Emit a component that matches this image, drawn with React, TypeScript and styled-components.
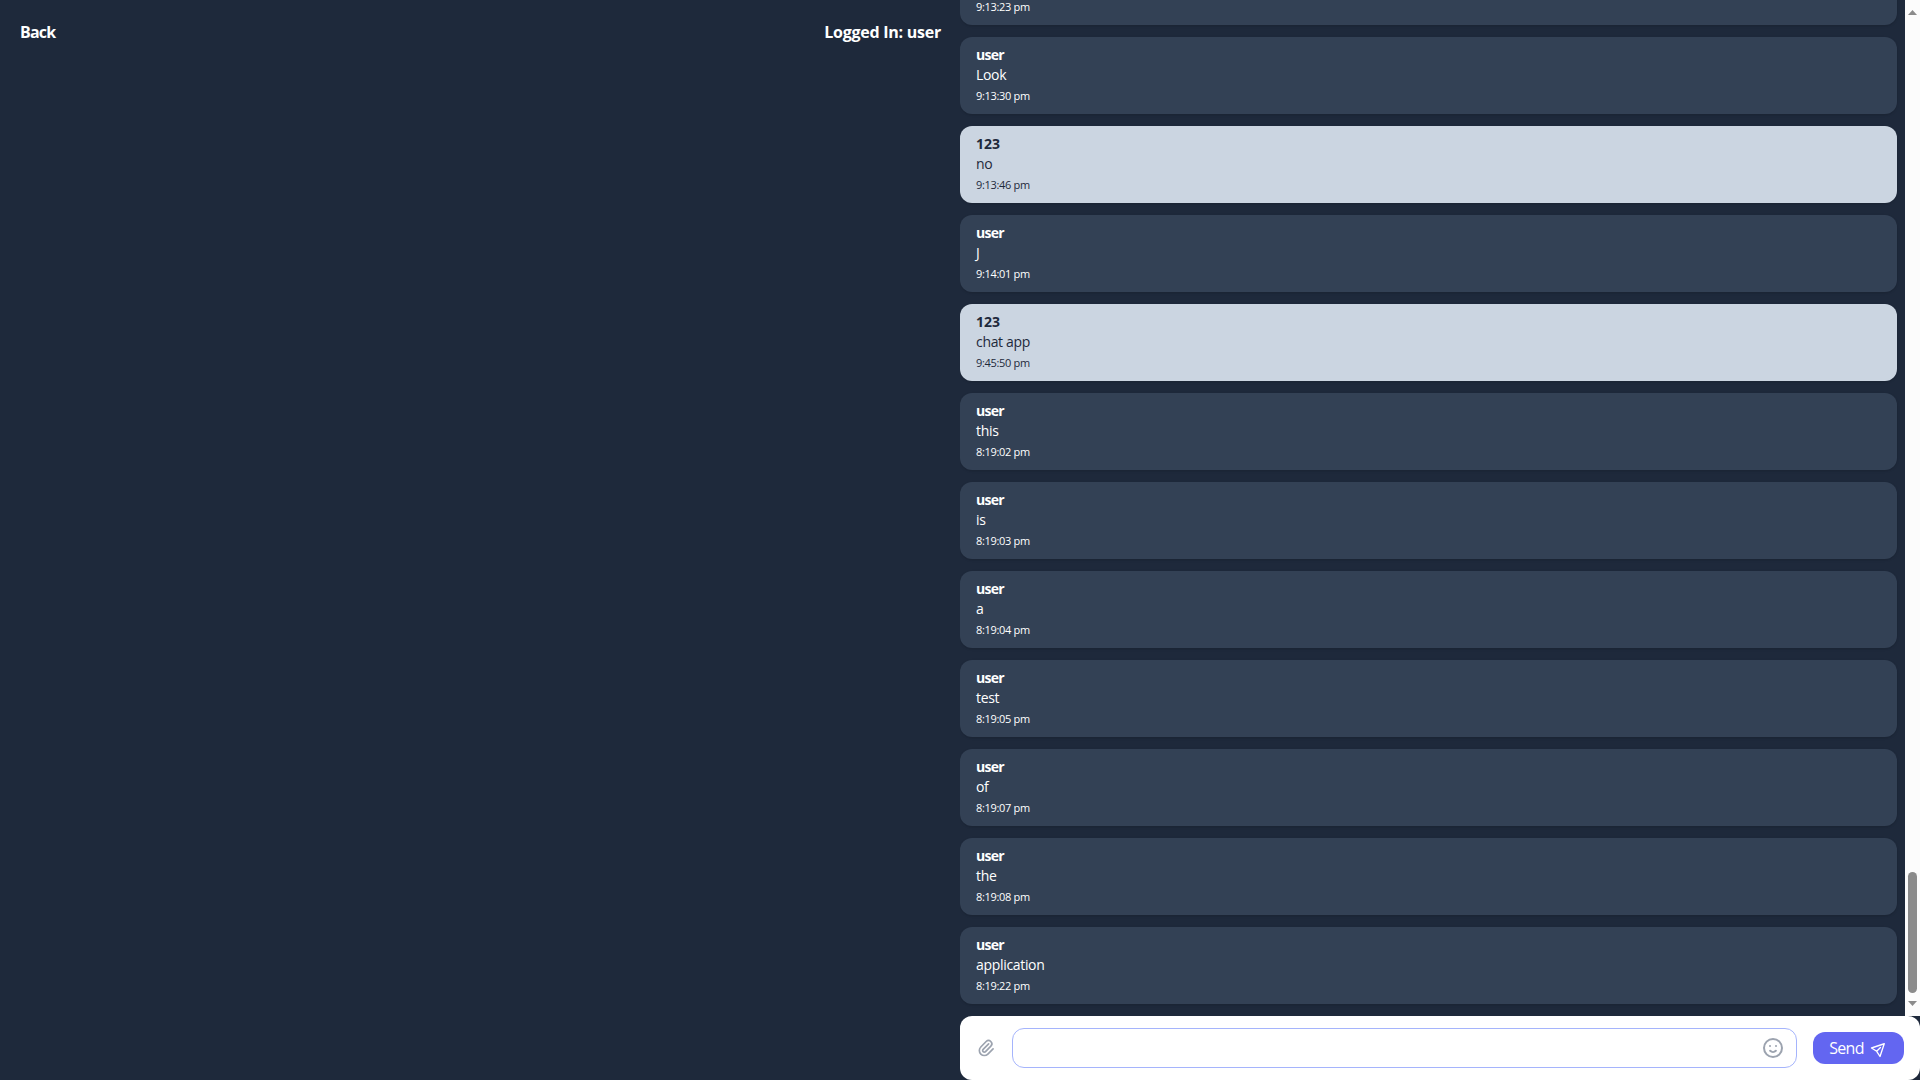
import React from "react";
import styled, { createGlobalStyle, css } from "styled-components";

const GlobalStyle = createGlobalStyle`
  *, *::before, *::after { box-sizing: border-box; }
  body {
    margin: 0;
    background: #1e293b;
    font-family: "Segoe UI", "Open Sans", "Noto Sans", sans-serif;
    overflow: hidden;
  }
`;

const Page = styled.div`
  display: flex;
  width: 100vw;
  height: 100vh;
  background: #1e293b;
  color: #fff;
`;

const SidePanel = styled.header`
  display: flex;
  flex: 1;
  align-items: flex-start;
  justify-content: space-between;
  padding: 20px 19px 20px 20px;
  font-size: 16px;
  font-weight: 700;
  line-height: 24px;
`;

const HeaderText = styled.span<{ $spacing: number }>`
  letter-spacing: ${(p) => p.$spacing}px;
`;

const ChatPanel = styled.main`
  display: flex;
  flex-direction: column;
  width: 50%;
  height: 100%;
`;

const ScrollArea = styled.div`
  display: flex;
  flex: 1;
  min-height: 0;
`;

const MessageList = styled.div`
  display: flex;
  flex: 1;
  flex-direction: column;
  justify-content: flex-end;
  gap: 12px;
  padding: 0 8px 12px 0;
  overflow: hidden;
`;

const Bubble = styled.article<{ $own: boolean }>`
  display: flex;
  flex: none;
  flex-direction: column;
  justify-content: flex-end;
  height: 77px;
  padding: 8px 16px 12px;
  border-radius: 12px;
  box-shadow: 0 1px 3px rgba(0, 0, 0, 0.1), 0 1px 2px -1px rgba(0, 0, 0, 0.1);
  ${(p) =>
    p.$own
      ? css`
          background: #334155;
          color: #fff;
        `
      : css`
          background: #cbd5e1;
          color: #1e293b;
        `}
`;

const Author = styled.div<{ $own: boolean }>`
  font-size: 14px;
  font-weight: 700;
  line-height: 20px;
  letter-spacing: ${(p) => (p.$own ? -0.75 : -0.05)}px;
`;

const Body = styled.div`
  margin-bottom: 4px;
  font-size: 14px;
  line-height: 20px;
  letter-spacing: -0.32px;
`;

const Time = styled.time`
  display: block;
  font-size: 11px;
  line-height: 13px;
  letter-spacing: -0.32px;
`;

const Track = styled.div`
  display: flex;
  flex-direction: column;
  align-items: center;
  width: 15px;
  padding: 10px 0;
  background: #fcfcfc;
`;

const Arrow = styled.svg`
  display: block;
  width: 9px;
  height: 5px;
  fill: #8b8b8b;
`;

const Thumb = styled.div`
  width: 9px;
  height: 121px;
  margin: auto 0 8px;
  border-radius: 5px;
  background: #8b8b8b;
`;

const Composer = styled.form`
  display: flex;
  align-items: center;
  gap: 16px;
  height: 64px;
  padding: 0 16px;
  border-radius: 12px;
  background: #fff;
`;

const IconButton = styled.button`
  display: flex;
  align-items: center;
  justify-content: center;
  padding: 0;
  border: 0;
  background: transparent;
  color: #9ca3af;
`;

const Field = styled.div`
  display: flex;
  flex: 1;
  height: 40px;
  border: 1px solid #a5b4fc;
  border-radius: 12px;

  ${IconButton} {
    width: 46px;
  }
`;

const TextInput = styled.input`
  flex: 1;
  min-width: 0;
  padding: 0 16px;
  border: 0;
  outline: 0;
  background: transparent;
  font: inherit;
`;

const SendButton = styled.button`
  display: flex;
  align-items: center;
  gap: 8px;
  width: 91px;
  height: 32px;
  padding: 0 0 0 16px;
  border: 0;
  border-radius: 12px;
  background: #6366f1;
  color: #fff;
  font-family: inherit;
  font-size: 16px;
  line-height: 24px;
`;

const SendLabel = styled.span`
  width: 35px;
  letter-spacing: -0.7px;
`;

const StrokeIcon = styled.svg<{ $size: number; $tilted?: boolean }>`
  flex: none;
  width: ${(p) => p.$size}px;
  height: ${(p) => p.$size}px;
  fill: none;
  stroke: currentColor;
  stroke-width: 2;
  stroke-linecap: round;
  stroke-linejoin: round;
  ${(p) => p.$tilted && "transform: rotate(45deg);"}
`;

interface Message {
  author: string;
  body?: string;
  time: string;
}

const messages: Message[] = [
  { author: "user", time: "9:13:23 pm" },
  { author: "user", body: "Look", time: "9:13:30 pm" },
  { author: "123", body: "no", time: "9:13:46 pm" },
  { author: "user", body: "J", time: "9:14:01 pm" },
  { author: "123", body: "chat app", time: "9:45:50 pm" },
  { author: "user", body: "this", time: "8:19:02 pm" },
  { author: "user", body: "is", time: "8:19:03 pm" },
  { author: "user", body: "a", time: "8:19:04 pm" },
  { author: "user", body: "test", time: "8:19:05 pm" },
  { author: "user", body: "of", time: "8:19:07 pm" },
  { author: "user", body: "the", time: "8:19:08 pm" },
  { author: "user", body: "application", time: "8:19:22 pm" },
];

export default function App() {
  const currentUser = "user";
  return (
    <>
      <GlobalStyle />
      <Page>
        <SidePanel>
          <HeaderText $spacing={-0.8}>Back</HeaderText>
          <HeaderText $spacing={-0.25}>Logged In: {currentUser}</HeaderText>
        </SidePanel>
        <ChatPanel>
          <ScrollArea>
            <MessageList>
              {messages.map((m) => (
                <Bubble key={m.time} $own={m.author === currentUser}>
                  {m.body && (
                    <>
                      <Author $own={m.author === currentUser}>{m.author}</Author>
                      <Body>{m.body}</Body>
                    </>
                  )}
                  <Time>{m.time}</Time>
                </Bubble>
              ))}
            </MessageList>
            <Track>
              <Arrow viewBox="0 0 9 5"><path d="M4.5 0 9 5H0z" /></Arrow>
              <Thumb />
              <Arrow viewBox="0 0 9 5"><path d="M0 0h9L4.5 5z" /></Arrow>
            </Track>
          </ScrollArea>
          <Composer onSubmit={(e) => e.preventDefault()}>
            <IconButton type="button" aria-label="Attach">
              <StrokeIcon $size={20} viewBox="0 0 24 24">
                <path d="M15.172 7l-6.586 6.586a2 2 0 102.828 2.828l6.414-6.586a4 4 0 00-5.656-5.656l-6.415 6.585a6 6 0 108.486 8.486L20.5 13" />
              </StrokeIcon>
            </IconButton>
            <Field>
              <TextInput type="text" />
              <IconButton type="button" aria-label="Emoji">
                <StrokeIcon $size={24} viewBox="0 0 24 24">
                  <path d="M14.828 14.828a4 4 0 01-5.656 0M9 10h.01M15 10h.01M21 12a9 9 0 11-18 0 9 9 0 0118 0z" />
                </StrokeIcon>
              </IconButton>
            </Field>
            <SendButton type="submit">
              <SendLabel>Send</SendLabel>
              <StrokeIcon $size={16} $tilted viewBox="0 0 24 24">
                <path d="M12 19l9 2-9-18-9 18 9-2zm0 0v-8" />
              </StrokeIcon>
            </SendButton>
          </Composer>
        </ChatPanel>
      </Page>
    </>
  );
}
